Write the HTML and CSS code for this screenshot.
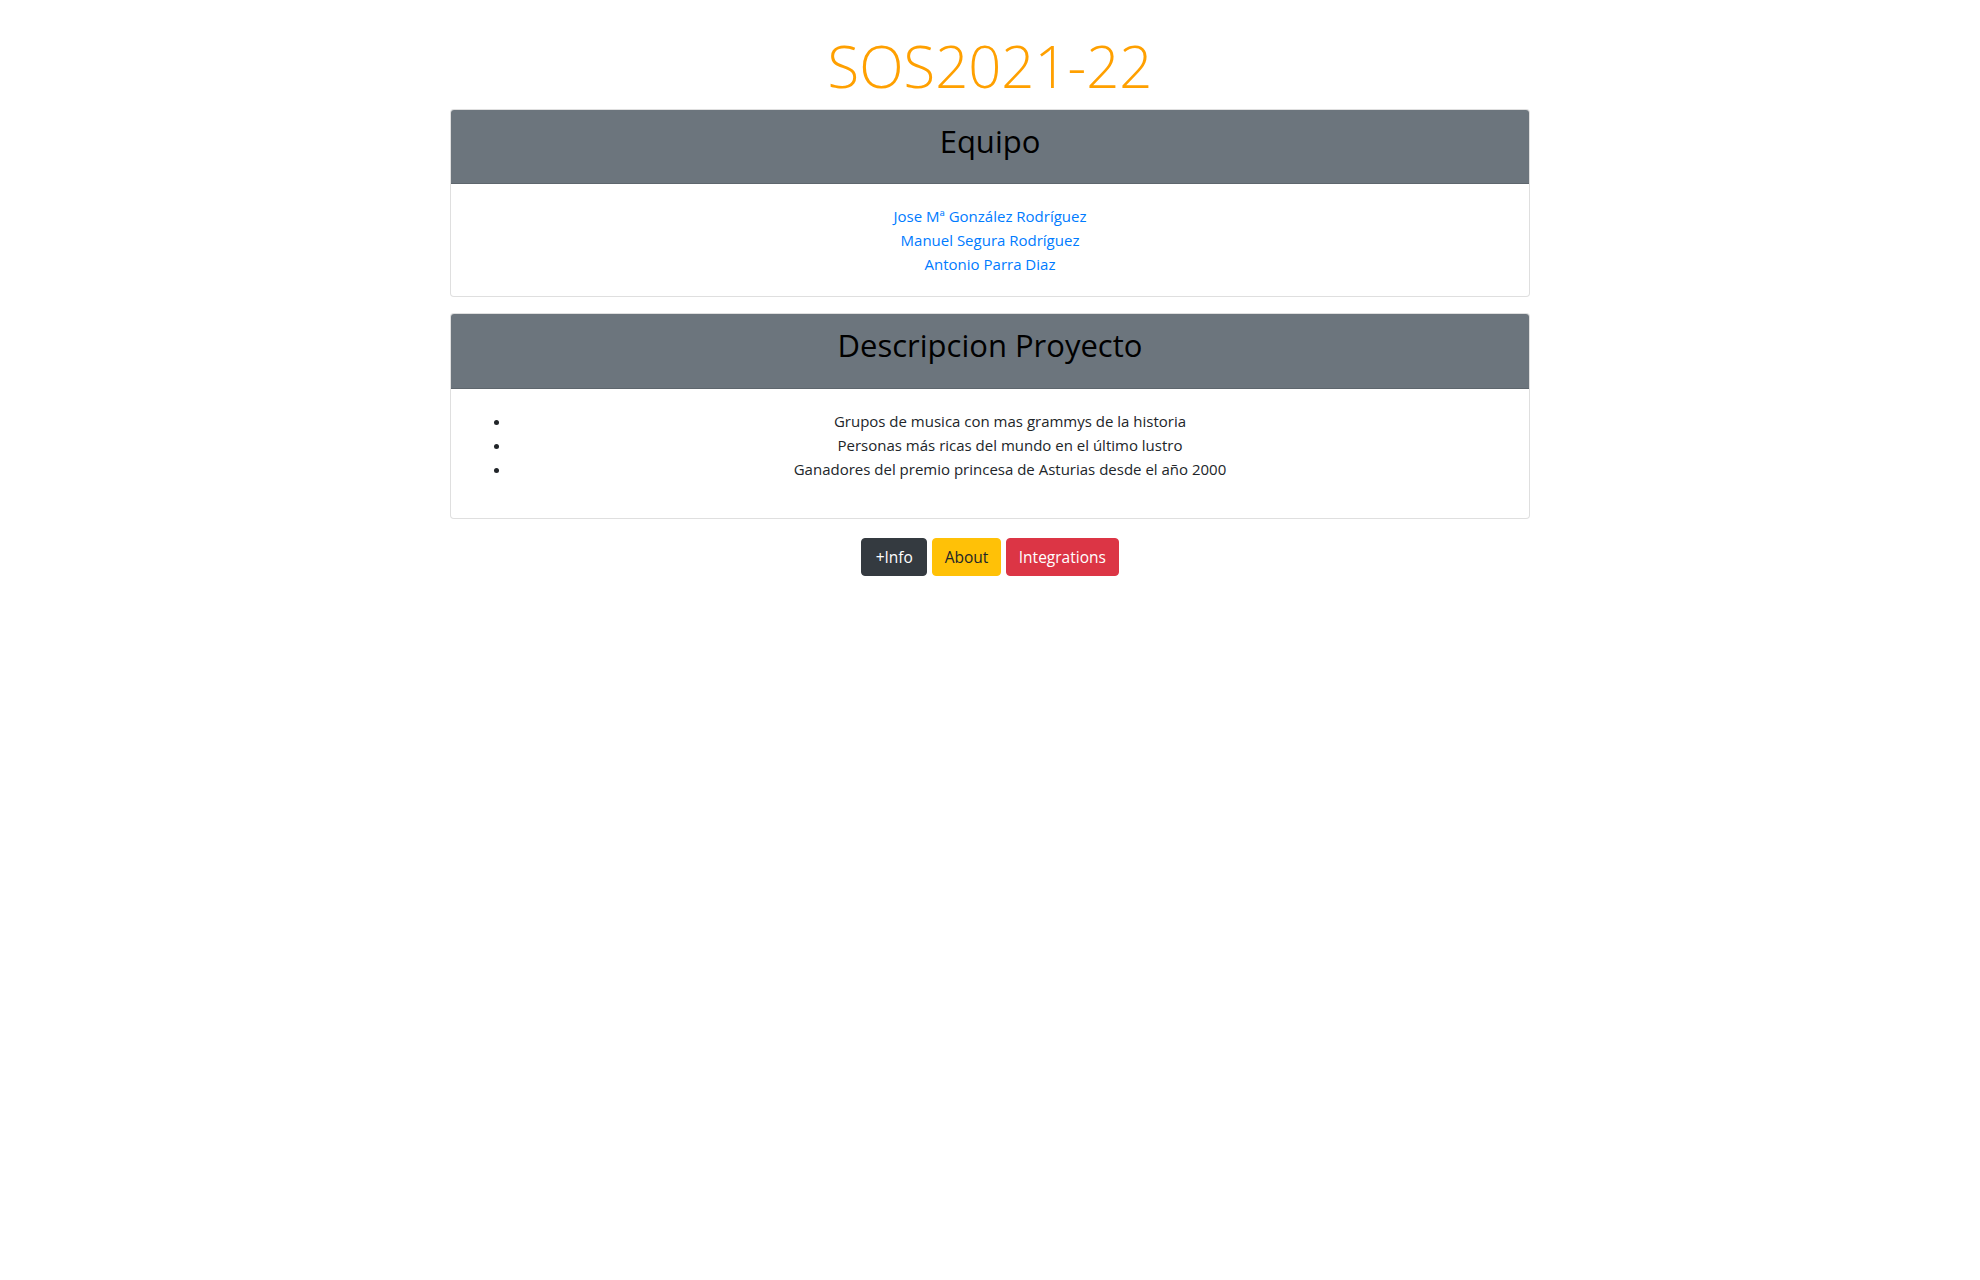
FILE: index.html
```html
<!DOCTYPE html>
<html lang="es">
<head>
<meta charset="utf-8">
<title>SOS2021-22</title>
<link rel="stylesheet" href="styles.css">
</head>
<body>
<main class="page">
  <h1 class="title">SOS2021-22</h1>

  <section class="card card-team">
    <header class="card-header"><h2>Equipo</h2></header>
    <div class="card-body">
      <div class="member"><a href="#">Jose Mª González Rodríguez</a></div>
      <div class="member"><a href="#">Manuel Segura Rodríguez</a></div>
      <div class="member"><a href="#">Antonio Parra Diaz</a></div>
    </div>
  </section>

  <section class="card card-desc">
    <header class="card-header"><h2>Descripcion Proyecto</h2></header>
    <div class="card-body">
      <ul class="desc-list">
        <li>Grupos de musica con mas grammys de la historia</li>
        <li>Personas más ricas del mundo en el último lustro</li>
        <li>Ganadores del premio princesa de Asturias desde el año 2000</li>
      </ul>
    </div>
  </section>

  <div class="actions">
    <a class="btn btn-dark" href="#">+Info</a>
    <a class="btn btn-warning" href="#">About</a>
    <a class="btn btn-danger" href="#">Integrations</a>
  </div>
</main>
</body>
</html>
```

FILE: styles.css
```css
* { box-sizing: border-box; }

body {
  margin: 0;
  font-family: "Open Sans", "Noto Sans", sans-serif;
  font-size: 15px;
  line-height: 24px;
  color: #212529;
  background: #fff;
}

.page {
  width: 1080px;
  margin: 0 auto;
  padding-top: 29.6px;
}

.title {
  margin: 0 0 8px;
  text-align: center;
  font-weight: 300;
  font-size: 58px;
  line-height: 71.2px;
  color: #ffa000;
}

.card {
  border: 1px solid rgba(0, 0, 0, 0.125);
  border-radius: 4px;
  background: #fff;
  overflow: hidden;
}

.card-team { margin-bottom: 16px; }

.card-header {
  background: #6c757d;
  border-bottom: 1px solid rgba(0, 0, 0, 0.125);
  padding: 12px 20px 22px;
  text-align: center;
}

.card-desc .card-header { padding-bottom: 23px; }

.card-header h2 {
  margin: 0;
  font-size: 31px;
  font-weight: 500;
  line-height: 39px;
  color: #000;
}

.card-body {
  padding: 20px;
  text-align: center;
}

.member a {
  color: #007bff;
  text-decoration: none;
}

.desc-list {
  margin: 0 0 17px;
  padding-left: 40px;
}

.desc-list li {
  text-align: center;
}

.actions {
  margin-top: 19.5px;
  text-align: center;
  font-size: 0;
}

.btn {
  display: inline-block;
  margin: 0 2.2px;
  padding: 6px 12px;
  font-size: 15.5px;
  line-height: 24px;
  border-radius: 4px;
  text-decoration: none;
  border: 1px solid transparent;
}

.btn-dark { background: #343a40; border-color: #343a40; color: #fff; padding-left: 13.5px; padding-right: 13.5px; }
.btn-warning { background: #ffc107; border-color: #ffc107; color: #212529; }
.btn-danger { background: #dc3545; border-color: #dc3545; color: #fff; }
```
